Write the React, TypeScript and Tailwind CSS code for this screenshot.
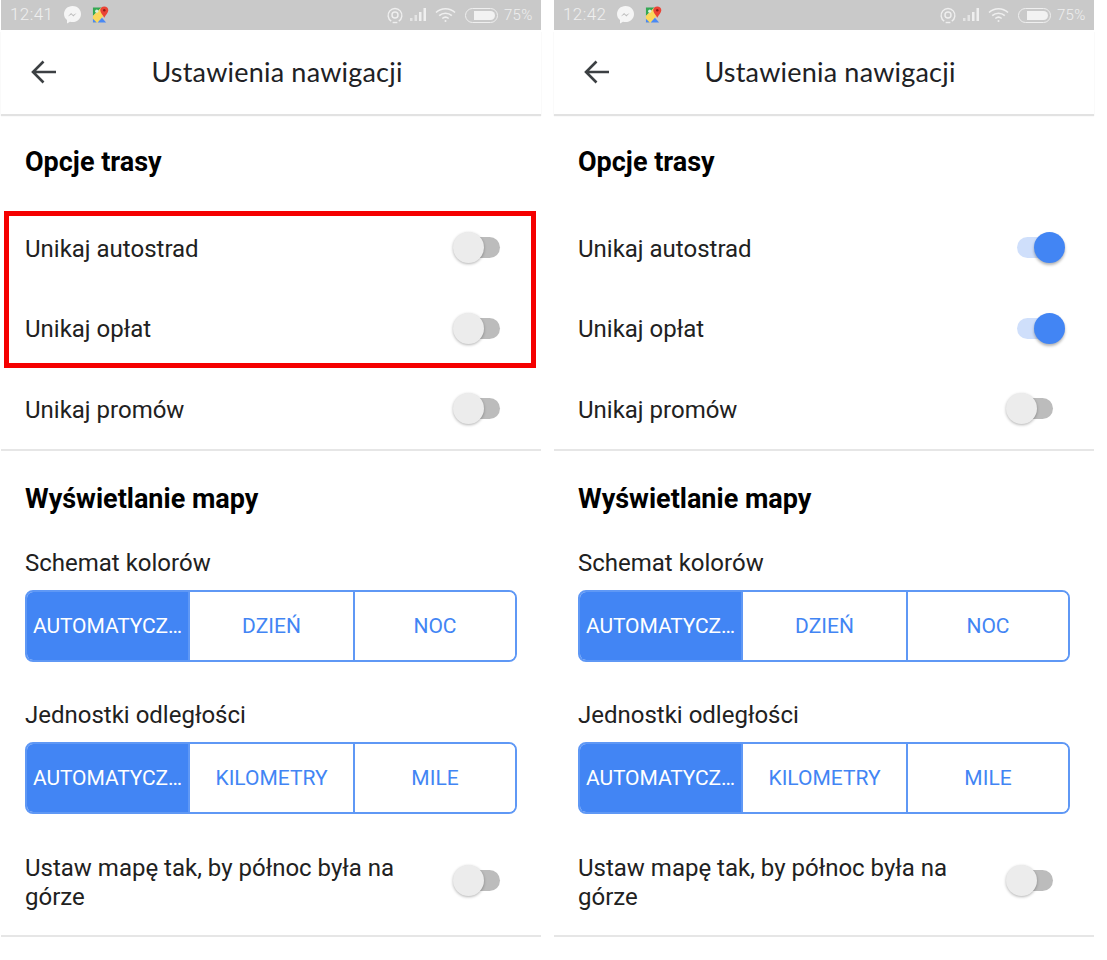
import { Fragment } from "react";

const fontStack = "font-['Roboto','Liberation_Sans',sans-serif]";

function Messenger() {
  return (
    <svg width="19" height="20" viewBox="0 0 19 20" className="ml-[10px]">
      <path d="M9.5 1C4.6 1 1 4.6 1 9c0 2.5 1.1 4.600 3 6v3.500l3-1.700c.8.2 1.600.3 2.500.3 4.900 0 8.500-3.600 8.500-8.100S14.400 1 9.500 1z" fill="#f5f5f5" />
      <path d="M4.800 11.500l3.300-3.400 2 1.900 3.600-2.100-3.300 3.500-2-2z" fill="#bdbdbd" />
    </svg>
  );
}

function MapsIcon() {
  return (
    <svg width="17" height="18" viewBox="0 0 18 18" className="ml-[10px]">
      <path d="M1 1h9L1 10z" fill="#34a853" />
      <path d="M1 10L10 1l3 8-7 8H1z" fill="#fbd75b" />
      <path d="M6 17l4.500-5 4.500 5z" fill="#4a89f3" />
      <path d="M1 13l4 4H1z" fill="#4a89f3" />
      <circle cx="5" cy="5" r="1.700" fill="#d8f0dc" />
      <path d="M13 0c2.500 0 4.300 1.800 4.300 4 0 2.800-3 4.800-4.300 8-1.300-3.200-4.300-5.200-4.300-8C8.700 1.800 10.500 0 13 0z" fill="#ea4335" />
      <circle cx="13" cy="4" r="1.300" fill="#8c1f16" />
    </svg>
  );
}

function StatusRight() {
  return (
    <div className="flex items-center text-[#efefef]">
      <svg width="16" height="18" viewBox="0 0 17 18" fill="none" stroke="currentColor" strokeWidth="1.500">
        <path d="M4.500 15.500A7.300 7.300 0 1 1 12.500 15.500" />
        <circle cx="8.500" cy="9" r="3.200" />
        <path d="M6 17h5" />
      </svg>
      <svg width="17" height="14" viewBox="0 0 17 14" fill="currentColor" className="ml-[7px]">
        <rect x="0" y="10" width="2.500" height="3" opacity="0.7" />
        <rect x="4.500" y="7" width="2.500" height="6" opacity="0.7" />
        <rect x="9" y="4" width="2.500" height="9" />
        <rect x="13.500" y="0" width="2.500" height="13" />
      </svg>
      <svg width="21" height="16" viewBox="0 0 21 16" fill="none" stroke="currentColor" strokeWidth="1.600" className="ml-[8px]">
        <path d="M1 5.500c5.300-5 13.700-5 19 0" />
        <path d="M4.200 8.700c3.500-3.200 9.100-3.200 12.600 0" />
        <path d="M7.300 11.500c1.800-1.500 4.600-1.500 6.400 0" />
        <circle cx="10.500" cy="14" r="1" fill="currentColor" stroke="none" />
      </svg>
      <div className="ml-[9px] flex h-[15px] w-[33px] items-center rounded-full border-[1.5px] border-[#efefef] p-[2px] pl-[8px]">
        <div className="h-full w-full rounded-l-[2px] rounded-r-full bg-[#f2f2f2]" />
      </div>
      <span className="ml-[6px] w-[29px] text-[15px] font-light tracking-[0.3px]">75%</span>
    </div>
  );
}

function Toggle({ on }: { on: boolean }) {
  if (on) {
    return (
      <div className="relative h-[31px] w-[60px] shrink-0">
        <div className="absolute top-[5px] left-[12px] h-[21px] w-[40px] rounded-full bg-[#cfdffb]" />
        <div className="absolute top-0 right-0 h-[31px] w-[31px] rounded-full bg-[#4285f4] shadow-[0_2px_3px_rgba(0,0,0,0.3)]" />
      </div>
    );
  }
  return (
    <div className="relative h-[31px] w-[60px] shrink-0">
      <div className="absolute top-[5px] left-[8px] h-[21px] w-[40px] rounded-full bg-[#bcbcbc]" />
      <div className="absolute top-0 left-[1px] h-[31px] w-[31px] rounded-full bg-[#ececec] shadow-[0_1px_3px_rgba(0,0,0,0.3)]" />
    </div>
  );
}

function SwitchRow({ label, on }: { label: string; on: boolean }) {
  return (
    <div className="flex h-[80.5px] items-center justify-between pr-[29px] pl-6">
      <span className="mt-[2px] text-[24px] text-[#212121]">{label}</span>
      <Toggle on={on} />
    </div>
  );
}

function Segmented({ options }: { options: string[] }) {
  return (
    <div className="mx-6 grid h-[72px] w-[492px] grid-cols-[161px_165px_1fr] overflow-hidden rounded-lg border-2 border-[#5f98f5]">
      {options.map((o, i) => (
        <div
          key={o}
          className={
            i === 0
              ? "flex items-center justify-center bg-[#4285f4] pt-[1px] text-[21px] tracking-[-0.1px] whitespace-nowrap text-white"
              : "flex items-center justify-center border-l-2 border-[#5f98f5] bg-white pt-[1px] text-[21px] text-[#4285f4]"
          }
        >
          {o}
        </div>
      ))}
    </div>
  );
}

function Phone({ time, on }: { time: string; on: boolean }) {
  return (
    <div className={`w-[540px] shrink-0 bg-white ${fontStack}`}>
      <div className="flex h-[30px] items-center justify-between bg-[#c9c9c9] pr-[8px] pl-[9px]">
        <div className="flex items-center">
          <span className="text-[17px] font-light tracking-[0.4px] text-[#efefef]">{time}</span>
          <Messenger />
          <MapsIcon />
        </div>
        <StatusRight />
      </div>

      <div className="relative flex h-[84px] items-center justify-center pl-3 shadow-[0_2px_1px_#e2e2e2]">
        <svg width="26" height="24" viewBox="0 0 26 24" fill="none" stroke="#3c4043" strokeWidth="2.600" className="absolute top-[30px] left-[30px]">
          <path d="M25 12H2.500M12.500 1.500L2 12l10.500 10.500" />
        </svg>
        <span className="font-['Lato','Roboto',sans-serif] text-[27px] tracking-[0.2px] text-[#202124]">
          Ustawienia nawigacji
        </span>
      </div>

      <div className="mt-[2px] flex h-[91.5px] items-center pl-6 text-[27px] font-bold text-black">
        Opcje trasy
      </div>
      <SwitchRow label="Unikaj autostrad" on={on} />
      <SwitchRow label="Unikaj opłat" on={on} />
      <SwitchRow label="Unikaj promów" on={false} />
      <div className="h-[2px] bg-[#e6e6e6]" />

      <div className="flex h-[94px] items-center pt-[2px] pl-6 text-[27px] font-bold text-black">
        Wyświetlanie mapy
      </div>
      <div className="flex h-[34px] items-center pt-[2px] pl-6 text-[24px] text-[#212121]">Schemat kolorów</div>
      <div className="mt-[11px]">
        <Segmented options={["AUTOMATYCZ…", "DZIEŃ", "NOC"]} />
      </div>
      <div className="mt-[35px] flex h-[36px] items-center pl-6 text-[24px] text-[#212121]">Jednostki odległości</div>
      <div className="mt-[9px]">
        <Segmented options={["AUTOMATYCZ…", "KILOMETRY", "MILE"]} />
      </div>

      <div className="flex h-[121px] items-center justify-between pt-[12px] pr-[29px] pl-6">
        <span className="mt-[4px] w-[400px] text-[24px] leading-[29px] text-[#212121]">
          Ustaw mapę tak, by północ była na górze
        </span>
        <Toggle on={false} />
      </div>
      <div className="h-[2px] bg-[#e6e6e6]" />
    </div>
  );
}

export default function App() {
  return (
    <div className="relative flex min-h-[960px] w-[1107px] gap-[13px] overflow-hidden bg-white pl-px">
      {[
        { time: "12:41", on: false },
        { time: "12:42", on: true },
      ].map((p) => (
        <Fragment key={p.time}>
          <Phone time={p.time} on={p.on} />
        </Fragment>
      ))}
      {/* czerwona ramka na pierwszym ekranie */}
      <div className="absolute top-[211px] left-[4px] h-[157px] w-[532px] border-[5px] border-[#f50000]" />
    </div>
  );
}
